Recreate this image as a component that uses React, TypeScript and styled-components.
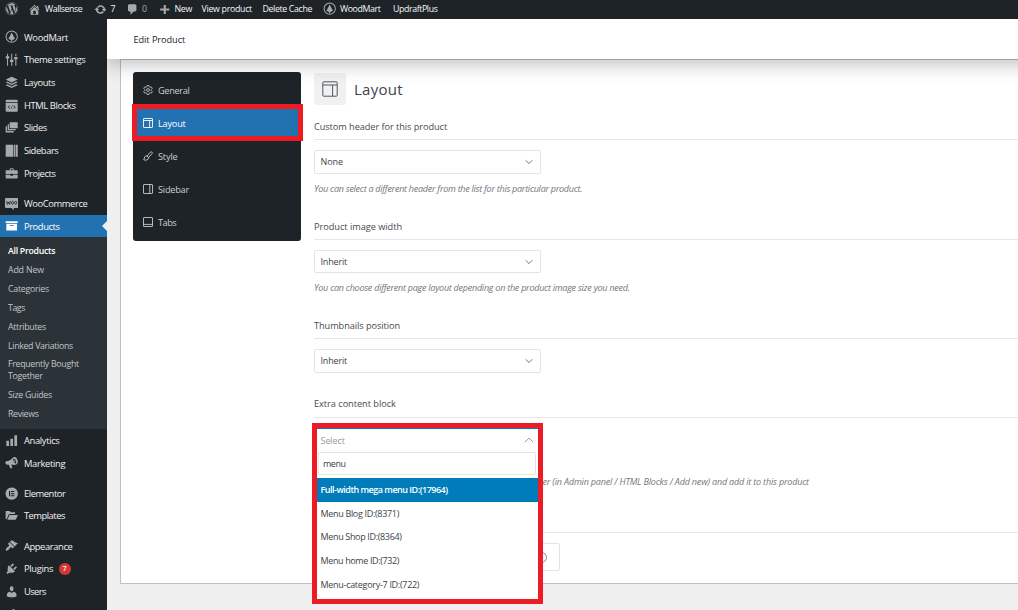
import React from 'react';
import styled, { createGlobalStyle, css } from 'styled-components';
import { FaWordpress } from 'react-icons/fa';

const Global = createGlobalStyle`
  * { box-sizing: border-box; }
  html, body { margin: 0; padding: 0; }
  body {
    width: 1018px; height: 610px; overflow: hidden; background: #efefef;
    font-family: "Open Sans", "Noto Sans", sans-serif; color: #3c434a;
  }
`;

const Page = styled.div`
  width: 1018px; height: 610px; overflow: hidden;
  display: flex; flex-direction: column;
`;

/* ---------- text ---------- */
const Text = styled.span<{ $ls?: number }>`
  white-space: nowrap;
  letter-spacing: ${p => p.$ls ?? -0.3}px;
`;

/* ---------- admin bar ---------- */
const AdminBar = styled.header`
  height: 19px; flex: none; display: flex; align-items: center;
  background: #1d2327; color: #f6f7f7; font-size: 8.8px; font-weight: 500;
  position: relative; z-index: 3;
`;
const BarItem = styled.div<{ $w: number; $gap?: number; $pad?: number; $dim?: boolean }>`
  width: ${p => p.$w}px; height: 19px; padding-left: ${p => p.$pad ?? 0}px; padding-bottom: 1px;
  display: flex; align-items: center; gap: ${p => p.$gap ?? 4}px; flex: none;
  ${p => p.$dim && css`color: #a7aaad; font-weight: 400;`}
  svg { color: #a7aaad; flex: none; }
`;

/* ---------- side menu ---------- */
const Body = styled.div`flex: 1; min-height: 0; display: flex;`;
const Side = styled.nav`
  width: 107px; flex: none; background: #1d2327; padding-top: 6.8px;
  position: relative; z-index: 2; overflow: hidden;
`;
const MenuItem = styled.div<{ $current?: boolean; $gapTop?: boolean }>`
  height: 22.7px; padding-left: 5px; display: flex; align-items: center; gap: 5.5px;
  margin-top: ${p => (p.$gapTop ? 7.5 : 0)}px;
  font-size: 9.4px; font-weight: 500; color: #f0f0f1; position: relative;
  svg { flex: none; color: #a7aaad; }
  ${p => p.$current && css`
    background: #2271b1; color: #fff;
    svg { color: #fff; }
    &::after {
      content: ''; position: absolute; right: 0; top: 6px;
      border: 5.5px solid transparent; border-left: 0; border-right-color: #efefef;
    }
  `}
`;
const SubMenu = styled.div`
  background: #2c3338; padding: 4.4px 8px 5px; color: #c0c4c8; font-size: 8.8px; height: 191.6px;
`;
const SubItem = styled.div<{ $active?: boolean }>`
  padding: 3.43px 0; line-height: 12px;
  ${p => p.$active && css`color: #fff; font-weight: 600;`}
`;
const Badge = styled.span`
  width: 12px; height: 12px; border-radius: 50%; background: #d63638; color: #fff;
  font-size: 6.6px; font-weight: 600; line-height: 12px; text-align: center;
`;

/* ---------- content ---------- */
const Content = styled.main`flex: 1; min-width: 0; display: flex; flex-direction: column;`;
const TitleBar = styled.div`
  height: 40px; flex: none; margin-right: -30px; padding-left: 26.5px; background: #fff;
  display: flex; align-items: center; font-size: 9.2px; color: #1d2327;
  box-shadow: 0 7px 17px rgba(20, 24, 32, 0.24); position: relative; z-index: 1;
`;
const Panel = styled.section`
  height: 525px; margin-left: 13px; margin-right: -4px; background: #fff;
  border: 1px solid #bfc0c3; padding: 12px 0 0 12px; display: flex; align-items: flex-start;
`;
const Tabs = styled.div`
  width: 168px; height: 169px; flex: none; background: #1d2327; border-radius: 3px;
  padding-top: 2px; position: relative;
`;
const Tab = styled.div<{ $active?: boolean }>`
  height: 33px; padding: 0 0 1px 9.5px; display: flex; align-items: center; gap: 5.5px;
  font-size: 9.2px; color: #ccced0;
  ${p => p.$active && css`background: #2271b1; color: #fff; font-weight: 500;`}
`;
const TabMarker = styled.div`
  position: absolute; left: -1px; top: 32px; width: 171px; height: 37px; border: 5px solid #ed1c24;
`;
const Form = styled.div`flex: 1; margin-left: 13px; padding-top: 1px;`;
const FormHead = styled.div`
  height: 41px; display: flex; align-items: flex-start; gap: 8px;
  font-size: 15px; font-weight: 500; color: #3c434a; line-height: 32px;
`;
const HeadIcon = styled.div`
  width: 32px; height: 32px; background: #f1f1f1; border-radius: 3px; color: #50575e;
  display: flex; align-items: center; justify-content: center;
`;
const Field = styled.div<{ $h: number }>`height: ${p => p.$h}px; position: relative;`;
const Label = styled.div<{ $lh?: number }>`
  height: 26px; border-bottom: 1px solid #e6e6e6; line-height: ${p => p.$lh ?? 26}px; font-size: 9.2px;
  font-weight: 500; color: #454b51;
`;
const Select = styled.div<{ $h?: number }>`
  margin-top: 10px; width: 227px; height: ${p => p.$h ?? 24}px; border: 1px solid #e4e4e4; border-radius: 2px;
  padding: 0 6px 1px 5.5px; display: flex; align-items: center; justify-content: space-between;
  font-size: 9px; color: #3c434a;
  svg { color: #777; margin-top: 1px; }
`;
const Hint = styled.div`
  margin-top: 8px; line-height: 14px; font-size: 9px; font-style: italic; color: #72777c;
`;
const WideHint = styled(Hint)`margin-top: 57px; padding-left: 228.5px;`;
const Actions = styled.div`border-top: 1px solid #e6e6e6; padding-top: 10px;`;
const ActionButton = styled.div`
  width: 246px; height: 28px; border: 1px solid #e4e4e4; border-radius: 2px; color: #888;
  display: flex; align-items: center; justify-content: flex-end; padding-right: 12px;
`;

/* ---------- opened select ---------- */
const Dropdown = styled.div`
  position: absolute; z-index: 4; left: -2px; top: 31px; width: 231px; height: 181px;
  border: 5px solid #ed1c24; background: #fff; font-size: 9px; color: #3c434a;
`;
const DropHead = styled.div`
  height: 24px; border-top: 1px solid #007cba; padding: 0 4px 1px 3.5px; color: #999;
  display: flex; align-items: center; justify-content: space-between;
`;
const Search = styled.div`
  margin: 0 2px 3px 1px; height: 23px; border: 1px solid #e4e4e4; border-radius: 2px;
  padding-left: 4px; line-height: 21px; font-size: 9px;
`;
const Option = styled.div<{ $active?: boolean }>`
  height: 23.7px; line-height: 24.6px; padding-left: 3.5px;
  ${p => p.$active && css`background: #007cba; color: #fff; font-weight: 600;`}
`;

/* ---------- icons ---------- */
const Glyph = ({ d, size = 13.4 }: { d: string; size?: number }) => (
  <svg width={size} height={size} viewBox="0 0 20 20" fill="currentColor" fillRule="evenodd"><path d={d} /></svg>
);
const WoodMartIcon = () => (
  <svg width="13.4" height="13.4" viewBox="0 0 20 20" fill="none" stroke="currentColor">
    <circle cx="10" cy="10" r="8.4" strokeWidth="1.5" />
    <path d="M10 3.6l4.8 9.6c-1.2 1.1-2.600 1.500-4 1.600V17H9.200v-2.200c-1.400-.1-2.800-.5-4-1.600z" fill="currentColor" stroke="none" />
  </svg>
);
const SlidersIcon = () => (
  <svg width="13.4" height="13.4" viewBox="0 0 20 20" fill="currentColor">
    <path d="M3 1h1.600v5H3zM3 8h1.600v11H3zM1.200 5h5.200v3.400H1.200zM9.200 1h1.600v9.500H9.200zM9.200 13h1.600v6H9.200zM7.400 10h5.200v3.400H7.400zM15.400 1H17v4h-1.600zM15.400 9H17v10h-1.600zM13.600 6h5.200v3.400h-5.200z" />
  </svg>
);
const WooIcon = () => (
  <svg width="13.4" height="13.4" viewBox="0 0 20 20">
    <path d="M1.500 1.500h17q1.500 0 1.500 1.500v12q0 1.500-1.500 1.500H13l.5 3L9.500 16.500h-8Q0 16.500 0 15V3q0-1.500 1.500-1.500z" fill="currentColor" />
    <path d="M2.500 6l1.200 5L5.500 7.500 7 11l1-5" fill="none" stroke="#1d2327" strokeWidth="1.300" />
    <ellipse cx="11.300" cy="8.600" rx="1.500" ry="2.100" fill="none" stroke="#1d2327" strokeWidth="1.200" />
    <ellipse cx="15.900" cy="8.600" rx="1.500" ry="2.100" fill="none" stroke="#1d2327" strokeWidth="1.200" />
  </svg>
);
const LayoutIcon = ({ size = 10 }: { size?: number }) => (
  <svg width={size} height={size} viewBox="0 0 16 16" fill="none" stroke="currentColor" strokeWidth={size > 12 ? 1 : 1.400}>
    <rect x=".8" y=".8" width="14.400" height="14.400" rx=".8" /><path d="M.8 4h14.400M10.600 4v11.200" />
  </svg>
);
const SidebarIcon = () => (
  <svg width="10" height="10" viewBox="0 0 16 16" fill="none" stroke="currentColor" strokeWidth="1.400">
    <rect x=".8" y=".8" width="14.400" height="14.400" rx=".8" /><path d="M10.800 .8v14.400" />
  </svg>
);
const TabsIcon = () => (
  <svg width="10" height="10" viewBox="0 0 16 16" fill="none" stroke="currentColor" strokeWidth="1.400">
    <rect x=".8" y=".8" width="14.400" height="14.400" rx=".8" /><path d="M.8 11.800h14.400" />
  </svg>
);
const GearIcon = () => (
  <svg width="10" height="10" viewBox="0 0 16 16" fill="none" stroke="currentColor" strokeWidth="1.300" strokeLinejoin="round">
    <path d="M6.600 .8h2.800l.5 2 1.500.8 2-.6 1.400 2.400L13.300 7v2l1.500 1.600-1.400 2.400-2-.6-1.500.8-.5 2H6.600l-.5-2-1.500-.8-2 .6-1.400-2.400L2.700 9V7L1.200 5.400 2.600 3l2 .6 1.500-.8z" />
    <circle cx="8" cy="8" r="2.300" />
  </svg>
);
const BrushIcon = () => (
  <svg width="10" height="10" viewBox="0 0 16 16" fill="none" stroke="currentColor" strokeWidth="1.400" strokeLinejoin="round">
    <path d="M6.300 8l5.500-6.200c1.600-1.500 4 .5 2.700 2.300L9 10.500z" />
    <path d="M6.300 8C4 7.400 2.300 9 2.300 11c0 1.500-.6 2.400-1.300 3 3 1.500 8.200.6 8-3.500z" />
  </svg>
);
const Chevron = ({ up }: { up?: boolean }) => (
  <svg width="10" height="10" viewBox="0 0 10 10" fill="none" stroke="currentColor" strokeWidth="1">
    <path d={up ? 'M1 7l4-3.800L9 7' : 'M1.700 3.300L5 6.600l3.300-3.300'} />
  </svg>
);

const D = {
  home: 'M16 8.500l1.530 1.530-1.060 1.060L10 4.600l-6.470 6.490-1.060-1.060L10 2.500l4 4v-2h2v4zm-6-2.460l6 5.990V18H4v-5.970zM12 17v-5H8v5h4z',
  update: 'M10.200 3.280c3.530 0 6.430 2.610 6.920 6h2.080l-3.500 4-3.500-4h2.320c-.45-1.970-2.210-3.450-4.320-3.450-1.450 0-2.730.71-3.540 1.780L4.950 5.660C6.230 4.200 8.110 3.280 10.200 3.280zm-.4 13.440c-3.520 0-6.430-2.610-6.920-6H.8l3.500-4c1.170 1.330 2.330 2.670 3.500 4H5.480c.45 1.970 2.210 3.450 4.320 3.450 1.450 0 2.730-.71 3.540-1.780l1.710 1.950c-1.280 1.460-3.150 2.380-5.250 2.380z',
  comment: 'M5 2h9q.82 0 1.410.59T16 4v7q0 .82-.59 1.410T14 13h-2l-5 5v-5H5q-.82 0-1.410-.59T3 11V4q0-.82.590-1.410T5 2z',
  plus: 'M17.500 8.500v3.200H12v5.300H8.800v-5.300H3.300V8.500h5.500V3.200H12v5.300z',
  layers: 'M10 1l9 4.300-9 4.300-9-4.300zM3.400 8.300L10 11.500l6.600-3.200L19 9.500l-9 4.300-9-4.300zM3.400 12.500L10 15.700l6.600-3.200 2.400 1.200L10 18l-9-4.300z',
  html: 'M2.500 1h15Q19 1 19 2.500V5H1V2.500Q1 1 2.500 1zM1 6h18v11.500q0 1.500-1.500 1.500h-15Q1 19 1 17.500zM7 9.500l-3 2.800L7 15v-1.200l-1.600-1.500L7 10.700zM13 9.500v1.200l1.600 1.600-1.600 1.500V15l3-2.700zM10.700 9.500l-2 5.500h.8l2-5.500z',
  slides: 'M7 2h12v9H7zM4 5h2v7h10v2H4zM1 8h2v7h10v2H1z',
  sidebars: 'M1 1h11.500v18H1zM13.500 1h2v18h-2zM16.300 1H19v18h-2.700z',
  portfolio: 'M7 5V3.500Q7 2 8.500 2h3Q13 2 13 3.500V5h5q1 0 1 1v5h-7v-1H8v1H1V6q0-1 1-1zM8.300 5h3.400V3.500H8.300zM1 12h7v1.200h4V12h7v4q0 1-1 1H2q-1 0-1-1z',
  archive: 'M19 3.500v2.500H1V3.500zM2 7h16v10H2zM13 10V9H7v1z',
  chart: 'M18 18V2h-4v16zM12 18V7H8v11zM2 18h4v-8H2z',
  megaphone: 'M1.500 8Q4 8 8 6l4.500-4Q16 0 18.200 5t-.7 7.500Q14 14 10 12.800l-.5.2 1.500 5-3 .8L5.800 13Q2 13.500 1 11.500T1.500 8zM12.500 4q-.8 1.500.5 4.300t3 3q1.500-1 .3-4.300T12.500 4zM13 6q2.200 0 2.500 2.500L14 9.300z',
  elementor: 'M10 .8a9.200 9.200 0 1 0 .01 0zM6 6h1.700v8H6zM9 6h5v1.600H9zM9 9.200h5v1.600H9zM9 12.400h5V14H9z',
  folder: 'M1 3h6l1.500 2H15v2.500H6L2.500 15H1zM6.800 8.800H19.500L16 16H3.500z',
  brush: 'M14.480 11.060L7.410 3.990l1.500-1.500c.5-.56 2.300-.47 3.510.32 1.210.8 1.430 1.280 2.910 2.100 1.180.64 2.450 1.260 4.450.85zm-.71.71L6.700 4.700 4.930 6.470c-.39.39-.39 1.020 0 1.410l1.060 1.060c.39.39.39 1.030 0 1.420-.6.6-1.430 1.110-2.210 1.690-.35.26-.7.53-1.010.84C1.430 14.230.4 16.080 1.400 17.070c.99 1 2.840-.03 4.180-1.360.31-.31.58-.66.85-1.020.57-.78 1.080-1.610 1.690-2.210.39-.39 1.020-.39 1.410 0l1.060 1.060c.39.39 1.020.39 1.410 0z',
  plug: 'M13.110 4.360L9.870 7.600 8 5.730l3.240-3.240c.35-.34 1.050-.2 1.560.32.52.51.66 1.210.31 1.550zm-8 1.770l.91-1.120 9.010 9.010-1.190.84c-.71.71-2.630 1.160-3.820 1.160H6.140L4.900 17.260c-.59.59-1.540.59-2.120 0-.59-.58-.59-1.530 0-2.120l1.240-1.240v-3.880c0-1.130.4-3.190 1.090-3.890zm7.260 3.970l3.240-3.240c.34-.35 1.040-.21 1.550.31.52.51.66 1.210.31 1.550l-3.240 3.250z',
  user: 'M10 9.250c-2.270 0-2.730-3.440-2.730-3.440C7 4.020 7.820 2 9.970 2c2.160 0 2.980 2.020 2.710 3.810 0 0-.41 3.440-2.680 3.440zm0 2.570L12.720 10c2.390 0 4.520 2.330 4.520 4.530v2.490s-3.650 1.130-7.240 1.130c-3.650 0-7.240-1.130-7.240-1.130v-2.490c0-2.250 1.940-4.480 4.470-4.480z',
  wrench: 'M16.700 9.300c-1.400 1.400-3.300 1.700-4.900.9L5 17.300c-1 1-2.200 1-2.700 0-.7-.6-.6-1.800.2-2.600l7-6.600c-.9-1.700-.7-3.700.7-5.200 1.300-1.200 3-1.600 4.500-1.100l-2.600 2.700 2.800 2.800 2.800-2.600c.6 1.600.2 3.300-1 4.600z',
};

type Entry = { label?: string; icon: React.ReactNode; ls?: number; gap?: boolean };
const top: Entry[] = [
  { label: 'WoodMart', icon: <WoodMartIcon />, ls: -0.28 },
  { label: 'Theme settings', icon: <SlidersIcon />, ls: -0.38 },
  { label: 'Layouts', icon: <Glyph d={D.layers} />, ls: -0.42 },
  { label: 'HTML Blocks', icon: <Glyph d={D.html} />, ls: -0.38 },
  { label: 'Slides', icon: <Glyph d={D.slides} />, ls: -0.38 },
  { label: 'Sidebars', icon: <Glyph d={D.sidebars} />, ls: -0.4 },
  { label: 'Projects', icon: <Glyph d={D.portfolio} />, ls: -0.44 },
  { label: 'WooCommerce', icon: <WooIcon />, ls: -0.38, gap: true },
];
const bottom: Entry[] = [
  { label: 'Analytics', icon: <Glyph d={D.chart} />, ls: -0.34 },
  { label: 'Marketing', icon: <Glyph d={D.megaphone} />, ls: -0.32 },
  { label: 'Elementor', icon: <Glyph d={D.elementor} />, ls: -0.42, gap: true },
  { label: 'Templates', icon: <Glyph d={D.folder} />, ls: -0.5 },
  { label: 'Appearance', icon: <Glyph d={D.brush} />, ls: -0.39, gap: true },
  { label: 'Plugins', icon: <Glyph d={D.plug} />, ls: -0.32 },
  { label: 'Users', icon: <Glyph d={D.user} />, ls: -0.55 },
  { icon: <Glyph d={D.wrench} /> },
];
const sub: [React.ReactNode, number][] = [
  ['All Products', -0.3], ['Add New', -0.16], ['Categories', -0.27], ['Tags', -0.43], ['Attributes', -0.29],
  ['Linked Variations', -0.33], [<>Frequently Bought<br />Together</>, -0.3], ['Size Guides', -0.28], ['Reviews', -0.35],
];
const Item = ({ e }: { e: Entry }) => (
  <MenuItem $gapTop={e.gap}>
    {e.icon}{e.label && <Text $ls={e.ls}>{e.label}</Text>}{e.label === 'Plugins' && <Badge>7</Badge>}
  </MenuItem>
);

export default function App() {
  return (
    <Page>
      <Global />
      <AdminBar>
        <BarItem $w={28} $pad={5}><FaWordpress size={13.4} /></BarItem>
        <BarItem $w={65.5}><Glyph d={D.home} size={13} /><Text $ls={-0.42}>Wallsense</Text></BarItem>
        <BarItem $w={32}><Glyph d={D.update} size={13} /><Text>7</Text></BarItem>
        <BarItem $w={32.5} $gap={3.5} $dim><Glyph d={D.comment} size={13} /><Text>0</Text></BarItem>
        <BarItem $w={43.5} $gap={3.5}><Glyph d={D.plus} size={13} /><Text>New</Text></BarItem>
        <BarItem $w={61}><Text $ls={-0.29}>View product</Text></BarItem>
        <BarItem $w={60}><Text $ls={-0.36}>Delete Cache</Text></BarItem>
        <BarItem $w={70.5}><WoodMartIcon /><Text $ls={-0.38}>WoodMart</Text></BarItem>
        <BarItem $w={60}><Text $ls={-0.4}>UpdraftPlus</Text></BarItem>
      </AdminBar>
      <Body>
        <Side>
          {top.map((e, i) => <Item key={i} e={e} />)}
          <MenuItem $current><Glyph d={D.archive} /><Text $ls={-0.4}>Products</Text></MenuItem>
          <SubMenu>
            {sub.map(([label, ls], i) => <SubItem key={i} $active={i === 0}><Text $ls={ls}>{label}</Text></SubItem>)}
          </SubMenu>
          {bottom.map((e, i) => <Item key={i} e={e} />)}
        </Side>
        <Content>
          <TitleBar><Text $ls={-0.06}>Edit Product</Text></TitleBar>
          <Panel>
            <Tabs>
              <Tab><GearIcon /><Text $ls={-0.33}>General</Text></Tab>
              <Tab $active><LayoutIcon /><Text $ls={-0.22}>Layout</Text></Tab>
              <Tab><BrushIcon /><Text $ls={-0.18}>Style</Text></Tab>
              <Tab><SidebarIcon /><Text $ls={-0.23}>Sidebar</Text></Tab>
              <Tab><TabsIcon /><Text $ls={-0.5}>Tabs</Text></Tab>
              <TabMarker />
            </Tabs>
            <Form>
              <FormHead><HeadIcon><LayoutIcon size={16} /></HeadIcon><Text $ls={0.29}>Layout</Text></FormHead>
              <Field $h={100}>
                <Label><Text $ls={-0.06}>Custom header for this product</Text></Label>
                <Select><Text $ls={-0.07}>None</Text><Chevron /></Select>
                <Hint><Text $ls={-0.26}>You can select a different header from the list for this particular product.</Text></Hint>
              </Field>
              <Field $h={99}>
                <Label><Text $ls={-0.03}>Product image width</Text></Label>
                <Select $h={23}><Text $ls={-0.18}>Inherit</Text><Chevron /></Select>
                <Hint><Text $ls={-0.25}>You can choose different page layout depending on the product image size you need.</Text></Hint>
              </Field>
              <Field $h={79}>
                <Label><Text $ls={-0.06}>Thumbnails position</Text></Label>
                <Select><Text $ls={-0.18}>Inherit</Text><Chevron /></Select>
              </Field>
              <Field $h={140}>
                <Label $lh={24}><Text $ls={-0.03}>Extra content block</Text></Label>
                <WideHint><Text $ls={-0.175}>er (in Admin panel / HTML Blocks / Add new) and add it to this product</Text></WideHint>
                <Dropdown>
                  <DropHead><Text $ls={-0.06}>Select</Text><Chevron up /></DropHead>
                  <Search><Text $ls={-0.48}>menu</Text></Search>
                  <Option $active><Text $ls={-0.5}>Full-width mega menu ID:(17964)</Text></Option>
                  <Option><Text $ls={-0.32}>Menu Blog ID:(8371)</Text></Option>
                  <Option><Text $ls={-0.34}>Menu Shop ID:(8364)</Text></Option>
                  <Option><Text $ls={-0.38}>Menu home ID:(732)</Text></Option>
                  <Option><Text $ls={-0.29}>Menu-category-7 ID:(722)</Text></Option>
                </Dropdown>
              </Field>
              <Actions>
                <ActionButton>
                  <svg width="11" height="11" viewBox="0 0 11 11" fill="none" stroke="currentColor"><circle cx="5.500" cy="5.500" r="5" /></svg>
                </ActionButton>
              </Actions>
            </Form>
          </Panel>
        </Content>
      </Body>
    </Page>
  );
}
